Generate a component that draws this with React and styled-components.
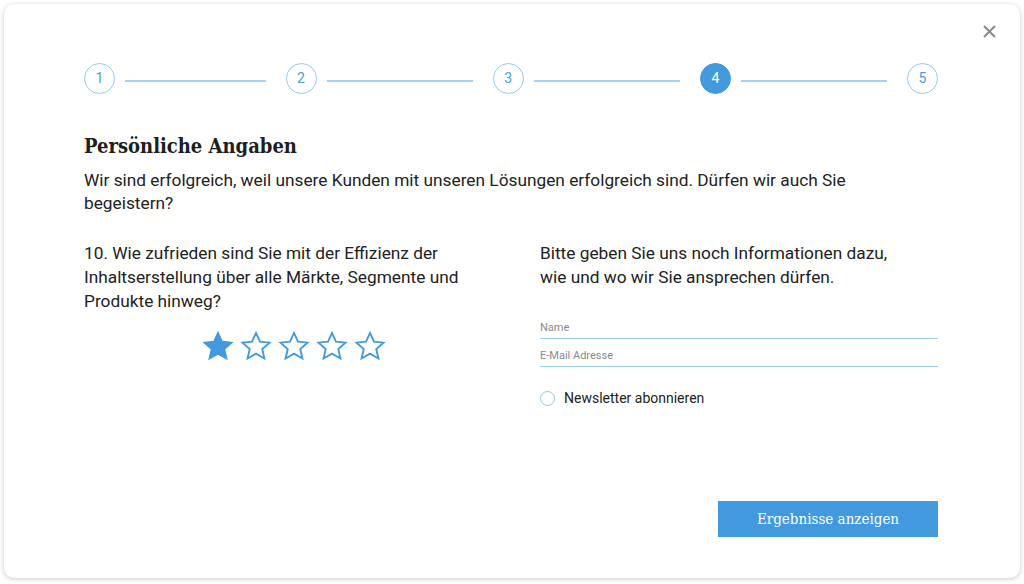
import React, { useState } from "react";
import styled, { createGlobalStyle } from "styled-components";

const GlobalStyle = createGlobalStyle`
  html, body {
    margin: 0;
    padding: 0;
    background: #ffffff;
  }
  body {
    font-family: Roboto, "Liberation Sans", Arial, sans-serif;
    color: #222222;
  }
`;

const Card = styled.div`
  position: relative;
  box-sizing: border-box;
  margin: 4px;
  width: 1016px;
  height: 574px;
  background: #ffffff;
  border-radius: 10px;
  box-shadow: 0 1px 5px rgba(0, 0, 0, 0.22);
  padding: 58px 82px 41px 80px;
  display: flex;
  flex-direction: column;
`;

const CloseButton = styled.button`
  position: absolute;
  top: 15px;
  right: 19px;
  width: 24px;
  height: 24px;
  padding: 0;
  border: none;
  background: none;
  display: flex;
  align-items: center;
  justify-content: center;
  cursor: pointer;
`;

const Stepper = styled.div`
  display: flex;
  align-items: center;
  height: 32px;
`;

const StepCircle = styled.div`
  box-sizing: border-box;
  flex: none;
  width: 31px;
  height: 31px;
  border-radius: 50%;
  border: 1.5px solid ${(p) => (p.$active ? "#4299dd" : "#95caef")};
  background: ${(p) => (p.$active ? "#4299dd" : "#ffffff")};
  color: ${(p) => (p.$active ? "#ffffff" : "#4a9de0")};
  font-size: 14px;
  display: flex;
  align-items: center;
  justify-content: center;
`;

const StepLine = styled.div`
  flex: ${(p) => p.$grow};
  height: 1.5px;
  margin: 6px 20px 0 10px;
  background: #a3d3f3;
`;

const Heading = styled.h2`
  margin: 40px 0 11px;
  font-family: "DejaVu Serif Condensed", "DejaVu Serif", serif;
  font-weight: bold;
  font-size: 20px;
  line-height: 24px;
  color: #1e1e1e;
`;

const Intro = styled.p`
  margin: 0;
  max-width: 820px;
  font-size: 17.3px;
  line-height: 23px;
`;

const Columns = styled.div`
  display: grid;
  grid-template-columns: 420px 1fr;
  column-gap: 36px;
  margin-top: 26px;
`;

const Column = styled.div`
  display: flex;
  flex-direction: column;
`;

const Question = styled.p`
  margin: 0;
  font-size: 17.3px;
  line-height: 24px;
`;

const Stars = styled.div`
  display: flex;
  justify-content: center;
  gap: 6px;
  margin-top: 17px;
`;

const StarButton = styled.button`
  padding: 0;
  border: none;
  background: none;
  width: 32px;
  height: 32px;
  cursor: pointer;
`;

const Fields = styled.div`
  display: flex;
  flex-direction: column;
  gap: 8px;
  margin-top: 30px;
`;

const Input = styled.input`
  box-sizing: border-box;
  width: 100%;
  height: 20px;
  padding: 0 0 2px;
  border: none;
  border-bottom: 1.5px solid #9fd2f2;
  outline: none;
  font-family: Roboto, "Liberation Sans", Arial, sans-serif;
  font-size: 11px;
  color: #333333;
  background: transparent;

  &::placeholder {
    color: #8a8a8a;
  }
`;

const RadioRow = styled.label`
  display: flex;
  align-items: center;
  gap: 9px;
  margin-top: 23px;
  font-size: 14px;
  color: #222222;
  cursor: pointer;
`;

const RadioDot = styled.span`
  box-sizing: border-box;
  width: 15px;
  height: 15px;
  border-radius: 50%;
  border: 1.5px solid #8cc6ee;
  background: ${(p) => (p.$checked ? "#4299dd" : "#ffffff")};
`;

const Footer = styled.div`
  margin-top: auto;
  display: flex;
  justify-content: flex-end;
`;

const SubmitButton = styled.button`
  width: 220px;
  height: 36px;
  border: none;
  background: #4299dd;
  color: #ffffff;
  font-family: "DejaVu Serif Condensed", "DejaVu Serif", serif;
  font-size: 15px;
  cursor: pointer;
`;

const StarIcon = ({ filled }) => (
  <svg width="32" height="32" viewBox="0 0 24 24">
    <path
      d="M12 2.2l2.95 6.6 7.15.7-5.4 4.8 1.6 7.05L12 17.7l-6.3 3.65 1.6-7.05-5.4-4.8 7.15-.7z"
      fill={filled ? "#4299dd" : "none"}
      stroke="#4299dd"
      strokeWidth="1.4"
      strokeLinejoin="miter"
    />
  </svg>
);

const steps = [1, 2, 3, 4, 5];
const lineGrow = [200, 208, 208, 208];

export default function App() {
  const [rating, setRating] = useState(1);
  const [newsletter, setNewsletter] = useState(false);

  return (
    <>
      <GlobalStyle />
      <Card>
        <CloseButton aria-label="Schließen">
          <svg width="13" height="13" viewBox="0 0 13 13">
            <path d="M1 1l11 11M12 1L1 12" stroke="#8a8a8a" strokeWidth="2" />
          </svg>
        </CloseButton>

        <Stepper>
          {steps.map((s, i) => (
            <React.Fragment key={s}>
              <StepCircle $active={s === 4}>{s}</StepCircle>
              {i < steps.length - 1 && <StepLine $grow={lineGrow[i]} />}
            </React.Fragment>
          ))}
        </Stepper>

        <Heading>Persönliche Angaben</Heading>
        <Intro>
          Wir sind erfolgreich, weil unsere Kunden mit unseren Lösungen erfolgreich sind. Dürfen wir auch Sie
          begeistern?
        </Intro>

        <Columns>
          <Column>
            <Question>
              10. Wie zufrieden sind Sie mit der Effizienz der Inhaltserstellung über alle Märkte, Segmente und
              Produkte hinweg?
            </Question>
            <Stars>
              {[1, 2, 3, 4, 5].map((n) => (
                <StarButton key={n} onClick={() => setRating(n)}>
                  <StarIcon filled={n <= rating} />
                </StarButton>
              ))}
            </Stars>
          </Column>

          <Column>
            <Question>
              Bitte geben Sie uns noch Informationen dazu,
              <br />
              wie und wo wir Sie ansprechen dürfen.
            </Question>
            <Fields>
              <Input placeholder="Name" />
              <Input placeholder="E-Mail Adresse" />
            </Fields>
            <RadioRow onClick={() => setNewsletter(!newsletter)}>
              <RadioDot $checked={newsletter} />
              Newsletter abonnieren
            </RadioRow>
          </Column>
        </Columns>

        <Footer>
          <SubmitButton>Ergebnisse anzeigen</SubmitButton>
        </Footer>
      </Card>
    </>
  );
}
